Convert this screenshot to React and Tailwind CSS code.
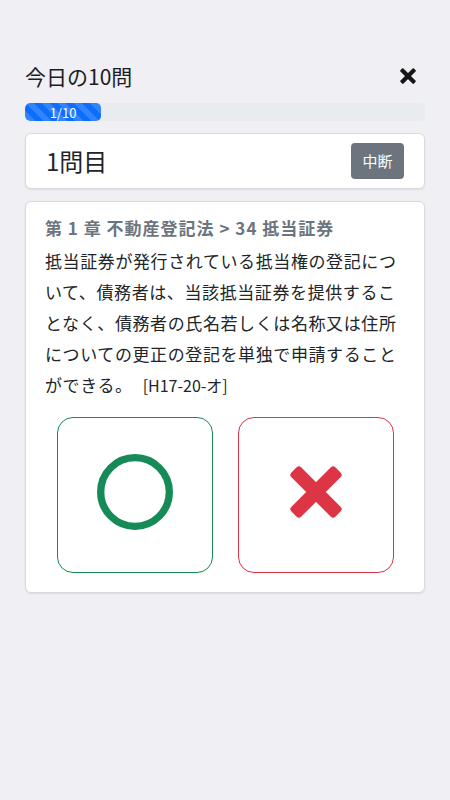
import React from "react";

export default function App() {
  return (
    <div
      className="min-h-[800px] w-full bg-[#efeff4] text-[#212529]"
      style={{ fontFamily: '"Noto Sans CJK JP", "Noto Sans", sans-serif' }}
    >
      <div className="px-[25px] pt-[62px]">
        {/* header */}
        <div className="flex h-[28px] items-center justify-between mb-[13px]">
          <div className="text-[21px] leading-[28px] text-[#1c1c1e]">今日の10問</div>
          <button className="mr-[9px] flex h-[16px] w-[16px] items-center justify-center">
            <svg width="16" height="16" viewBox="0 0 16 16">
              <rect x="-1.5" y="6" width="19" height="4.2" rx="1" fill="#161616" transform="rotate(45 8 8)" />
              <rect x="-1.5" y="6" width="19" height="4.2" rx="1" fill="#161616" transform="rotate(-45 8 8)" />
            </svg>
          </button>
        </div>

        {/* progress */}
        <div className="h-[18px] w-full overflow-hidden rounded-[5px] bg-[#e9ecef] mb-[12px]">
          <div className="flex h-full w-[76px] items-center justify-center rounded-[5px] bg-[#0d6efd] bg-[linear-gradient(45deg,rgba(255,255,255,.15)_25%,transparent_25%,transparent_50%,rgba(255,255,255,.15)_50%,rgba(255,255,255,.15)_75%,transparent_75%,transparent)] bg-[length:16px_16px] text-[13px] leading-none text-white">
            1/10
          </div>
        </div>

        {/* question number card */}
        <div className="mb-[12px] flex h-[56px] items-center justify-between rounded-[6px] border border-[#d9d9de] bg-white px-[20px] shadow-[0_1px_2px_rgba(0,0,0,0.08)]">
          <div className="text-[24px] leading-none">1問目</div>
          <button className="flex h-[36px] w-[53px] items-center justify-center rounded-[4px] bg-[#6c757d] text-[15px] text-white">
            中断
          </button>
        </div>

        {/* question card */}
        <div className="rounded-[6px] border border-[#d9d9de] bg-white px-[19px] pt-[14px] pb-[19px] shadow-[0_1px_2px_rgba(0,0,0,0.08)]">
          <div className="text-[17px] font-semibold leading-[24px] tracking-[1px] text-[#6c757d]">
            第 1 章 不動産登記法 &gt; 34 抵当証券
          </div>
          <p className="mt-[5px] whitespace-nowrap text-[17px] leading-[31px] tracking-[0.6px] text-[#212529]">
            抵当証券が発行されている抵当権の登記につ
            <br />
            いて、債務者は、当該抵当証券を提供するこ
            <br />
            となく、債務者の氏名若しくは名称又は住所
            <br />
            についての更正の登記を単独で申請すること
            <br />
            ができる。
            <span className="ml-[10px] text-[16px] tracking-normal">[H17-20-オ]</span>
          </p>

          <div className="mt-[16px] flex justify-center gap-[25px]">
            <button className="flex h-[156px] w-[156px] items-center justify-center rounded-[16px] border border-[#198754] bg-white">
              <svg width="76" height="76" viewBox="0 0 76 76" className="mb-[6px]">
                <circle cx="38" cy="38" r="34.3" fill="none" stroke="#168a57" strokeWidth="7.3" />
              </svg>
            </button>
            <button className="flex h-[156px] w-[156px] items-center justify-center rounded-[16px] border border-[#dc3545] bg-white">
              <svg width="56" height="56" viewBox="0 0 56 56" className="mb-[6px]">
                <rect x="-3.2" y="21" width="62.4" height="14" rx="3.5" fill="#dc3545" transform="rotate(45 28 28)" />
                <rect x="-3.2" y="21" width="62.4" height="14" rx="3.5" fill="#dc3545" transform="rotate(-45 28 28)" />
              </svg>
            </button>
          </div>
        </div>
      </div>
    </div>
  );
}
